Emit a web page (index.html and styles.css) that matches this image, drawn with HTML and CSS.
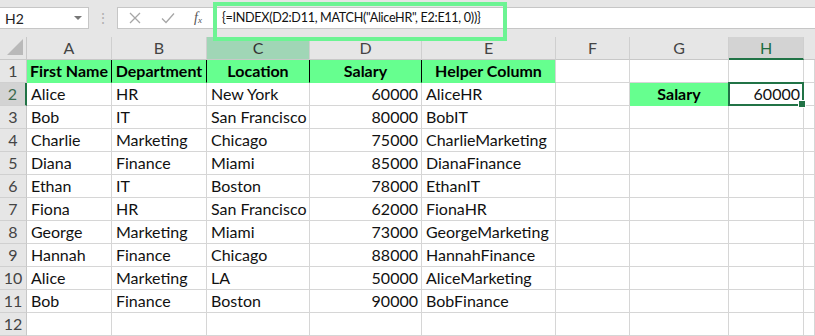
FILE: index.html
```html
<!DOCTYPE html>
<html>
<head>
<meta charset="utf-8">
<link rel="stylesheet" href="styles.css">
</head>
<body>
<div class="app">
  <div class="fbar">
    <div class="namebox"><span class="nb-text">H2</span><span class="nb-arrow"></span></div>
    <div class="grip">⋮</div>
    <div class="finput">
      <div class="ficons">
        <svg class="ic" width="14" height="14" viewBox="0 0 14 14"><path d="M2 2L12 12M12 2L2 12" stroke="#a6a6a6" stroke-width="1.3" fill="none"/></svg>
        <svg class="ic ic-check" width="16" height="14" viewBox="0 0 16 14"><path d="M2 7.5L6 11.5L14 2.5" stroke="#a6a6a6" stroke-width="1.3" fill="none"/></svg>
        <span class="fx">f<sub>x</sub></span>
      </div>
      <div class="ftext">{=INDEX(D2:D11, MATCH("AliceHR", E2:E11, 0))}</div>
    </div>
  </div>
  <div class="sheet">
    <div class="corner"><svg width="18" height="18" viewBox="0 0 18 18"><path d="M17 1L17 17L1 17Z" fill="#b9b9b9"/></svg></div>
    <div class="ch">A</div><div class="ch">B</div><div class="ch ch-c">C</div><div class="ch">D</div><div class="ch">E</div><div class="ch">F</div><div class="ch">G</div><div class="ch ch-sel">H</div><div class="ch ch-end"></div>

    <div class="rh">1</div>
    <div class="c hd bl">First Name</div><div class="c hd bl">Department</div><div class="c hd bl">Location</div><div class="c hd bl">Salary</div><div class="c hd">Helper Column</div><div class="c"></div><div class="c"></div><div class="c"></div><div class="c"></div>

    <div class="rh rh-sel">2</div>
    <div class="c">Alice</div><div class="c">HR</div><div class="c">New York</div><div class="c n">60000</div><div class="c">AliceHR</div><div class="c"></div><div class="c hd">Salary</div><div class="c n sel">60000</div><div class="c"></div>

    <div class="rh">3</div>
    <div class="c">Bob</div><div class="c">IT</div><div class="c">San Francisco</div><div class="c n">80000</div><div class="c">BobIT</div><div class="c"></div><div class="c"></div><div class="c"></div><div class="c"></div>

    <div class="rh">4</div>
    <div class="c">Charlie</div><div class="c">Marketing</div><div class="c">Chicago</div><div class="c n">75000</div><div class="c">CharlieMarketing</div><div class="c"></div><div class="c"></div><div class="c"></div><div class="c"></div>

    <div class="rh">5</div>
    <div class="c">Diana</div><div class="c">Finance</div><div class="c">Miami</div><div class="c n">85000</div><div class="c">DianaFinance</div><div class="c"></div><div class="c"></div><div class="c"></div><div class="c"></div>

    <div class="rh">6</div>
    <div class="c">Ethan</div><div class="c">IT</div><div class="c">Boston</div><div class="c n">78000</div><div class="c">EthanIT</div><div class="c"></div><div class="c"></div><div class="c"></div><div class="c"></div>

    <div class="rh">7</div>
    <div class="c">Fiona</div><div class="c">HR</div><div class="c">San Francisco</div><div class="c n">62000</div><div class="c">FionaHR</div><div class="c"></div><div class="c"></div><div class="c"></div><div class="c"></div>

    <div class="rh">8</div>
    <div class="c">George</div><div class="c">Marketing</div><div class="c">Miami</div><div class="c n">73000</div><div class="c">GeorgeMarketing</div><div class="c"></div><div class="c"></div><div class="c"></div><div class="c"></div>

    <div class="rh">9</div>
    <div class="c">Hannah</div><div class="c">Finance</div><div class="c">Chicago</div><div class="c n">88000</div><div class="c">HannahFinance</div><div class="c"></div><div class="c"></div><div class="c"></div><div class="c"></div>

    <div class="rh">10</div>
    <div class="c">Alice</div><div class="c">Marketing</div><div class="c">LA</div><div class="c n">50000</div><div class="c">AliceMarketing</div><div class="c"></div><div class="c"></div><div class="c"></div><div class="c"></div>

    <div class="rh">11</div>
    <div class="c">Bob</div><div class="c">Finance</div><div class="c">Boston</div><div class="c n">90000</div><div class="c">BobFinance</div><div class="c"></div><div class="c"></div><div class="c"></div><div class="c"></div>

    <div class="rh">12</div>
    <div class="c"></div><div class="c"></div><div class="c"></div><div class="c"></div><div class="c"></div><div class="c"></div><div class="c"></div><div class="c"></div><div class="c"></div>
  </div>
</div>
</body>
</html>
```
FILE: styles.css
```css
* { box-sizing: border-box; }
html, body { margin: 0; padding: 0; }
body {
  width: 815px;
  height: 336px;
  overflow: hidden;
  background: #ffffff;
  font-family: Lato, "Open Sans", sans-serif;
  color: #111;
}
.app { width: 815px; }

.fbar {
  height: 37px;
  background: #e6e6e6;
  display: flex;
  align-items: flex-start;
  padding-top: 7px;
}
.namebox {
  width: 89px;
  height: 22px;
  background: #fff;
  border: 1px solid #c6c6c6;
  border-left: none;
  display: flex;
  align-items: center;
  justify-content: space-between;
  padding: 0 6px 0 5px;
  font-size: 14px;
  color: #222;
}
.nb-arrow {
  width: 0; height: 0;
  border-left: 4px solid transparent;
  border-right: 4px solid transparent;
  border-top: 4px solid #777;
}
.grip {
  width: 28px;
  text-align: center;
  color: #b0b0b0;
  font-size: 14px;
  line-height: 22px;
}
.finput {
  flex: 1;
  height: 22px;
  background: #fff;
  border: 1px solid #c6c6c6;
  border-right: none;
  display: flex;
  align-items: stretch;
}
.ficons {
  width: 101px;
  display: flex;
  align-items: center;
  padding-left: 10px;
}
.ic { display: block; }
.ic-check { margin-left: 18px; }
.fx {
  margin-left: 18px;
  font-family: "Liberation Serif", serif;
  font-style: italic;
  font-size: 14px;
  color: #555;
}
.fx sub { font-size: 9px; vertical-align: -1px; }
.ftext {
  position: relative;
  font-size: 12.6px;
  line-height: 20px;
  color: #111;
  padding-left: 3px;
  letter-spacing: -0.3px;
  white-space: nowrap;
}
.ftext::before {
  content: "";
  position: absolute;
  left: -6px;
  top: -6px;
  width: 286px;
  height: 31px;
  border: 4px solid #6cf493;
}

.sheet {
  display: grid;
  grid-template-columns: 27px 85px 95px 103px 112px 134px 74px 99px 75px 11px;
  grid-auto-rows: 23px;
}
.corner {
  background: #e6e6e6;
  border-right: 1px solid #c8c8c8;
  border-bottom: 1px solid #c8c8c8;
  display: flex;
  align-items: flex-end;
  justify-content: flex-end;
  padding: 0 2px 3px 0;
}
.corner svg { display: block; }
.ch {
  background: #e6e6e6;
  border-right: 1px solid #cfcfcf;
  border-bottom: 1px solid #c8c8c8;
  text-align: center;
  font-size: 16px;
  line-height: 22px;
  color: #444;
}
.ch-c { background: #a0d6b6; color: #333; }
.ch-sel {
  background: #d3d3d3;
  color: #1e6b41;
  border-bottom: 2px solid #217346;
}
.ch-end { border-right: none; }
.rh {
  background: #e6e6e6;
  border-right: 1px solid #c8c8c8;
  border-bottom: 1px solid #d0d0d0;
  text-align: center;
  font-size: 16px;
  line-height: 22px;
  color: #444;
}
.rh-sel {
  background: #d3d3d3;
  color: #3e6b50;
  border-right: 2px solid #217346;
}
.c {
  border-right: 1px solid #d6d6d6;
  border-bottom: 1px solid #d6d6d6;
  font-size: 16px;
  line-height: 22px;
  padding: 0 3px 0 4px;
  white-space: nowrap;
  overflow: visible;
  color: #111;
}
.n { text-align: right; }
.hd {
  background: #66ff8f;
  font-weight: bold;
  text-align: center;
  padding: 0;
  border-bottom-color: #66ff8f;
  color: #000;
}
.hd.bl { border-right: 1px solid #000; }
.sel { position: relative; }
.sel::after {
  content: "";
  position: absolute;
  left: -1px;
  top: -1px;
  right: -1px;
  bottom: -1px;
  border: 2px solid #217346;
}
.sel::before {
  content: "";
  position: absolute;
  right: -3px;
  bottom: -3px;
  width: 6px;
  height: 6px;
  background: #217346;
  border: 1px solid #fff;
  z-index: 2;
}
```
